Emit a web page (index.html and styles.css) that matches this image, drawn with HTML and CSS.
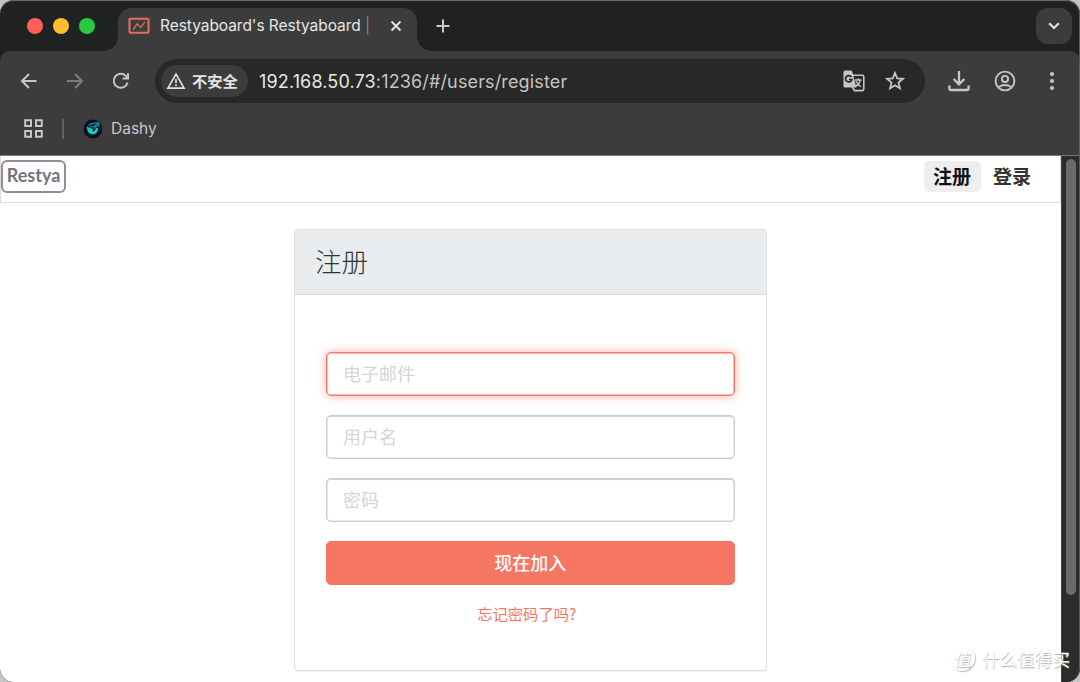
FILE: index.html
```
<!DOCTYPE html>
<html lang="zh-CN">
<head>
    <meta charset="UTF-8">
    <meta name="viewport" content="width=device-width, initial-scale=1.0">
    <title>Restyaboard's Restyaboard</title>
    <link rel="stylesheet" href="styles.css">
</head>
<body>
    <div class="window">
        <div class="tab-strip">
            <div class="lights">
                <span class="light red"></span>
                <span class="light yellow"></span>
                <span class="light green"></span>
            </div>
            <div class="tab">
                <svg class="favicon" width="22" height="18" viewBox="0 0 22 18">
                    <rect x="1.5" y="1.7" width="19" height="14" rx="0.8"/>
                    <path d="M5 12.8L9.1 6.8L12.8 10.6L16.8 4.8"/>
                </svg>
                <span class="tab-title">Restyaboard's Restyaboard <i>|</i></span>
                <svg class="tab-close" width="12" height="12" viewBox="0 0 12 12">
                    <path d="M1.5 1.5L10.5 10.5M10.5 1.5L1.5 10.5"/>
                </svg>
            </div>
            <svg class="new-tab" width="14" height="14" viewBox="0 0 14 14">
                <path d="M7 0.5V13.5M0.5 7H13.5"/>
            </svg>
            <div class="tab-search">
                <svg width="12" height="8" viewBox="0 0 12 8"><path d="M1.2 1.2L6 6L10.8 1.2"/></svg>
            </div>
        </div>

        <div class="chrome">
            <div class="toolbar">
                <svg class="back" width="18" height="18" viewBox="0 0 18 18">
                    <path d="M16.5 9H2.5M9 2L2 9L9 16"/>
                </svg>
                <svg class="forward" width="18" height="18" viewBox="0 0 18 18">
                    <path d="M1 9H15.5M9 2L16 9L9 16"/>
                </svg>
                <svg class="reload" width="18" height="18" viewBox="0 0 18 18">
                    <path d="M15.6 10.5A7 7 0 1 1 13.8 3.9L15.9 6.2M16 1.2V6.4H10.6"/>
                </svg>
                <div class="address">
                    <div class="insecure">
                        <svg width="20" height="18" viewBox="0 0 20 18">
                            <path d="M10 2.2L18 16.2H2Z"/>
                            <path d="M10 7V11.3M10 12.5V14.3"/>
                        </svg>
                        <span>不安全</span>
                    </div>
                    <div class="url"><b>192.168.50.73</b>:1236/#/users/register</div>
                    <svg class="translate" width="22" height="22" viewBox="0 0 22 22">
                        <path class="page" d="M10 5.3H19.2Q20.8 5.3 20.8 6.9V19Q20.8 20.6 19.2 20.6H11.5L9.4 17"/>
                        <path class="glyph" d="M12 10H18.5M15.2 8.2V10M17.4 10Q16.3 14.3 12.3 16.6M13 11.2Q14.8 14.8 18 16.8"/>
                        <path class="fill" d="M2 0.5H7.8Q9 0.5 9.3 1.7L13.4 17.5H2Q0.5 17.5 0.5 16V2Q0.5 0.5 2 0.5Z"/>
                        <path class="g" d="M8.4 6.9A3.2 3.2 0 1 0 8.9 9.5H5.9"/>
                    </svg>
                    <svg class="star" width="20" height="20" viewBox="0 0 20 20">
                        <path d="M10 2L12.2 7.4L18 7.8L13.5 11.6L14.9 17.3L10 14.2L5.1 17.3L6.5 11.6L2 7.8L7.8 7.4Z"/>
                    </svg>
                </div>
                <svg class="download" width="22" height="22" viewBox="0 0 22 22">
                    <path d="M11 1V14M5.6 9L11 14.4L16.4 9M1.4 15.5V18.8Q1.4 20 2.6 20H19.4Q20.6 20 20.6 18.8V15.5"/>
                </svg>
                <svg class="profile" width="22" height="22" viewBox="0 0 22 22">
                    <circle cx="11" cy="11" r="9.4"/>
                    <circle cx="11" cy="9" r="3.1"/>
                    <path d="M4.5 17.2Q11 12.8 17.5 17.2"/>
                </svg>
                <svg class="menu" width="6" height="20" viewBox="0 0 6 20">
                    <circle cx="3" cy="3" r="2.1"/>
                    <circle cx="3" cy="10" r="2.1"/>
                    <circle cx="3" cy="17" r="2.1"/>
                </svg>
            </div>
            <div class="bookmarks">
                <svg class="apps" width="19" height="19" viewBox="0 0 19 19">
                    <path d="M1.2 1.2H7V7H1.2ZM12 1.2H17.8V7H12ZM1.2 12H7V17.8H1.2ZM12 12H17.8V17.8H12Z"/>
                </svg>
                <span class="divider"></span>
                <svg class="dashy" width="20" height="20" viewBox="0 0 20 20">
                    <circle cx="10" cy="10" r="9.4" fill="#0b1022"/>
                    <path d="M4 7.2Q3 13.8 9.6 15.6Q14.6 14.8 15.2 9.4L13 8.6Q12.6 12 9.6 13Q10.8 10.4 8.4 9.2Q6.4 9.4 4 7.2Z" fill="#12cdb9"/>
                    <path d="M5.4 6.4Q8.4 4 15.6 3.8L16 8M6.6 7.6Q10 9 13.6 5.6M15 5L11 9.6" fill="none" stroke="#1695b4" stroke-width="1.2"/>
                </svg>
                <span class="bookmark">Dashy</span>
            </div>
        </div>

        <div class="viewport">
            <div class="page-area">
                <header class="navbar">
                    <div class="logo">Restya</div>
                    <nav>
                        <a class="active">注册</a>
                        <a>登录</a>
                    </nav>
                </header>
                <main>
                    <section class="panel">
                        <h1>注册</h1>
                        <form>
                            <input class="focused" type="text" placeholder="电子邮件">
                            <input type="text" placeholder="用户名">
                            <input type="password" placeholder="密码">
                            <button type="button">现在加入</button>
                            <a class="forgot">忘记密码了吗?</a>
                        </form>
                    </section>
                </main>
            </div>
            <div class="scrollbar"><div class="thumb"></div></div>
        </div>
        <div class="watermark"><span class="mark">值</span><span>什么值得买</span></div>
    </div>
</body>
</html>
```
FILE: styles.css
```
* {
    box-sizing: border-box;
}
body {
    margin: 0;
    background: #c4c4c4;
    font-family: "Noto Sans CJK SC", sans-serif;
}
svg {
    display: block;
    flex: none;
    fill: none;
    stroke: #c7c7c7;
    stroke-width: 2;
}
.window {
    position: relative;
    width: 1080px;
    height: 682px;
    border-radius: 14px;
    overflow: hidden;
    background: #202221;
    display: flex;
    flex-direction: column;
}
.window::after {
    content: "";
    position: absolute;
    inset: 0;
    border-radius: 14px;
    border-top: 1px solid #696b6a;
    border-right: 1px solid #5c5c5c;
    pointer-events: none;
}

/* tabs */
.tab-strip {
    height: 51px;
    flex: none;
    display: flex;
    align-items: center;
    padding: 1px 8px 0 27px;
}
.lights {
    display: flex;
    gap: 10px;
    width: 91px;
    margin-left: -0.5px;
    margin-right: 0.5px;
}
.light {
    width: 16px;
    height: 16px;
    border-radius: 50%;
}
.red { background: #ff5f57; }
.yellow { background: #febc2e; }
.green { background: #28c840; }
.tab {
    position: relative;
    width: 299px;
    height: 43px;
    align-self: flex-end;
    background: #3c3c3c;
    border-radius: 14px 14px 0 0;
    display: flex;
    align-items: center;
    padding: 0 15px 8px 10px;
}
.tab::before,
.tab::after {
    content: "";
    position: absolute;
    bottom: 0;
    width: 14px;
    height: 14px;
}
.tab::before {
    left: -14px;
    background: radial-gradient(circle at 0 0, transparent 13.5px, #3c3c3c 14px);
}
.tab::after {
    right: -14px;
    background: radial-gradient(circle at 100% 0, transparent 13.5px, #3c3c3c 14px);
}
.favicon {
    stroke: #e66c5c;
    margin-right: 10px;
}
.favicon path {
    stroke-width: 1.3;
}
.tab-title {
    flex: 1;
    font: 400 15.5px/20px Inter, "Noto Sans CJK SC", sans-serif;
    letter-spacing: -0.05px;
    color: #e6e6e6;
    white-space: nowrap;
}
.tab-title i {
    font-style: normal;
    color: #858585;
}
.tab-close {
    stroke: #e3e3e3;
}
.new-tab {
    margin-left: 19px;
    stroke: #c9c9c9;
}
.tab-search {
    width: 36px;
    height: 36px;
    border-radius: 12px;
    background: #3c3c3c;
    margin-left: auto;
    display: flex;
    align-items: center;
    justify-content: center;
}
.tab-search svg {
    stroke: #e3e3e3;
    stroke-width: 2.2;
}

/* toolbar and bookmarks */
.chrome {
    height: 105px;
    flex: none;
    background: #3c3c3c;
    border-bottom: 1px solid #777;
    border-radius: 10px 10px 0 0;
}
.toolbar {
    height: 60px;
    display: flex;
    align-items: center;
    padding: 0 25px 0 20px;
}
.forward {
    margin-left: 28px;
    stroke: #7c7c7c;
}
.reload {
    margin-left: 28px;
}
.address {
    width: 771px;
    height: 44px;
    margin-left: 25px;
    border-radius: 22px;
    background: #282828;
    display: flex;
    align-items: center;
    padding: 0 20px 0 6px;
}
.insecure {
    height: 32px;
    width: 87px;
    border-radius: 16px;
    background: #3c3c3c;
    display: flex;
    align-items: center;
    gap: 6px;
    padding-left: 5px;
    color: #e3e3e3;
    font-size: 15.3px;
    font-weight: 700;
    white-space: nowrap;
}
.insecure span {
    padding-bottom: 2px;
}
.insecure svg {
    stroke: #e3e3e3;
    stroke-width: 1.7;
}
.url {
    flex: 1;
    margin-left: 11px;
    padding-top: 1px;
    font: 400 18px/24px Inter, sans-serif;
    letter-spacing: 0.14px;
    color: #c4c4c4;
    white-space: nowrap;
}
.url b {
    font-weight: 400;
    color: #e6e6e6;
}
.translate {
    stroke-width: 1.6;
}
.translate .glyph {
    stroke-width: 1.3;
}
.translate .fill {
    fill: #c7c7c7;
    stroke: none;
}
.translate .g {
    stroke: #282828;
    stroke-width: 1.7;
}
.star {
    margin-left: 20px;
    stroke-width: 1.8;
}
.download {
    margin-left: 23px;
    stroke-width: 2.3;
}
.profile {
    margin-left: 24px;
    stroke-width: 1.9;
}
.menu {
    margin-left: 33px;
    fill: #c7c7c7;
    stroke: none;
}
.bookmarks {
    height: 35px;
    display: flex;
    align-items: center;
    padding-left: 24px;
}
.divider {
    width: 2px;
    height: 20px;
    margin: 0 19px 0 19px;
    background: #606060;
}
.dashy {
    stroke: none;
}
.bookmark {
    margin-left: 8px;
    font: 400 15.5px/20px Inter, sans-serif;
    color: #c7c7c7;
}

/* page */
.viewport {
    flex: 1;
    display: flex;
    background: #2c2c2c;
}
.page-area {
    flex: 1;
    background: #fff;
}
.navbar {
    height: 47px;
    border: 1px solid #ddd;
    border-top: none;
    display: flex;
    justify-content: space-between;
    padding: 4px 20px 0 0;
}
.logo {
    width: 65px;
    height: 33px;
    border: 2px solid #918d9b;
    border-radius: 6px;
    color: #777184;
    font: 700 18px/27px Lato, sans-serif;
    text-align: center;
}
nav {
    display: flex;
    gap: 2px;
    margin-top: 1px;
}
nav a {
    height: 31px;
    padding: 0 9px;
    border-radius: 5px;
    font-size: 19px;
    line-height: 30px;
    font-weight: 700;
    color: #333;
}
nav .active {
    width: 57px;
    margin-right: 1px;
    background: #eee;
    color: #111;
}
main {
    padding: 26px 0 0 294px;
}
.panel {
    width: 473px;
    height: 442px;
    border: 1px solid #dcdedf;
    border-radius: 4px;
    box-shadow: 0 1px 1px rgba(0, 0, 0, 0.05);
}
.panel h1 {
    height: 65px;
    margin: 0;
    padding-left: 20px;
    background: #e8ecef;
    border-bottom: 1px solid #d8dcde;
    border-radius: 3px 3px 0 0;
    font-size: 26.5px;
    line-height: 62px;
    font-weight: 300;
    color: #333;
}
form {
    padding: 57px 31.5px 0 31px;
    display: flex;
    flex-direction: column;
    gap: 19px;
}
input,
button {
    height: 44px;
    margin: 0;
    border-radius: 5px;
    font: 400 18px/26px "Noto Sans CJK SC", sans-serif;
}
input {
    padding: 0 16px 2px;
    background: #fff;
    border: 1px solid #c9cbcc;
    box-shadow: inset 0 1px 1px rgba(0, 0, 0, 0.1), inset 0 0 0 0.5px #d4d6d7;
}
input::placeholder {
    color: #d5d5d5;
}
input.focused {
    border-color: #f77866;
    box-shadow: inset 0 0 0 0.5px #f77866, 0 0 10px rgba(246, 119, 102, 0.6);
}
button {
    padding-bottom: 3px;
    background: #f67664;
    border: 1px solid #f67664;
    color: #fff;
    font-weight: 500;
}
.forgot {
    align-self: center;
    margin: -2px 7px 0 0;
    font-size: 15.3px;
    line-height: 22px;
    color: #f67664;
}
.scrollbar {
    width: 19px;
    background: #2c2c2c;
    border-left: 1px solid #444;
    padding: 3px 5px 0 4px;
}
.thumb {
    width: 10px;
    height: 436px;
    border-radius: 5px;
    background: #6b6b6b;
}
.watermark {
    position: absolute;
    right: 10px;
    bottom: 10px;
    display: flex;
    align-items: center;
    gap: 7px;
    font-size: 17.6px;
    line-height: 26px;
    color: #fff;
    text-shadow: 0.5px 0.5px 1px #aaa;
}
.mark {
    width: 23px;
    height: 23px;
    border-radius: 50%;
    box-shadow: 1px 1px 1px #bbb;
    font-size: 17px;
    line-height: 22px;
    text-align: center;
    transform: skewX(-8deg);
}
```
